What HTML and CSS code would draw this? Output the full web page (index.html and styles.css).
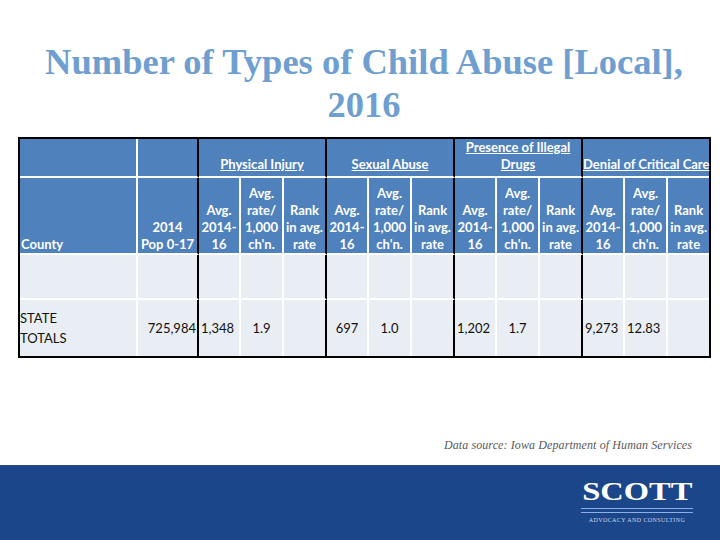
FILE: index.html
```html
<!DOCTYPE html>
<html>
<head>
<meta charset="utf-8">
<link rel="stylesheet" href="styles.css">
</head>
<body>
<div class="page">
  <h1 class="title">Number of Types of Child Abuse [Local],<br>2016</h1>
  <table class="data">
    <colgroup>
      <col style="width:118px"><col style="width:61px">
      <col style="width:42px"><col style="width:43px"><col style="width:43px">
      <col style="width:42px"><col style="width:43px"><col style="width:43px">
      <col style="width:42px"><col style="width:43px"><col style="width:43px">
      <col style="width:42px"><col style="width:43px"><col style="width:41px">
    </colgroup>
    <tr class="h1row">
      <th class="hd"></th>
      <th class="hd grp-end"></th>
      <th class="hd grp grp-end" colspan="3"><u>Physical Injury</u></th>
      <th class="hd grp grp-end" colspan="3"><u>Sexual Abuse</u></th>
      <th class="hd grp grp-end" colspan="3"><u>Presence of Illegal<br>Drugs</u></th>
      <th class="hd grp last" colspan="3"><u>Denial of Critical Care</u></th>
    </tr>
    <tr class="h2row">
      <th class="hd left">County</th>
      <th class="hd grp-end">2014<br>Pop 0-17</th>
      <th class="hd">Avg.<br>2014-<br>16</th><th class="hd">Avg.<br>rate/<br>1,000<br>ch'n.</th><th class="hd grp-end">Rank<br>in avg.<br>rate</th>
      <th class="hd">Avg.<br>2014-<br>16</th><th class="hd">Avg.<br>rate/<br>1,000<br>ch'n.</th><th class="hd grp-end">Rank<br>in avg.<br>rate</th>
      <th class="hd">Avg.<br>2014-<br>16</th><th class="hd">Avg.<br>rate/<br>1,000<br>ch'n.</th><th class="hd grp-end">Rank<br>in avg.<br>rate</th>
      <th class="hd">Avg.<br>2014-<br>16</th><th class="hd">Avg.<br>rate/<br>1,000<br>ch'n.</th><th class="hd last">Rank<br>in avg.<br>rate</th>
    </tr>
    <tr class="erow">
      <td></td><td class="grp-end"></td>
      <td></td><td></td><td class="grp-end"></td>
      <td></td><td></td><td class="grp-end"></td>
      <td></td><td></td><td class="grp-end"></td>
      <td></td><td></td><td class="last"></td>
    </tr>
    <tr class="drow">
      <td class="name">STATE<br>TOTALS</td>
      <td class="grp-end r">725,984</td>
      <td class="l">1,348</td><td class="c">1.9</td><td class="grp-end"></td>
      <td class="c">697</td><td class="c">1.0</td><td class="grp-end"></td>
      <td class="l">1,202</td><td class="c">1.7</td><td class="grp-end"></td>
      <td class="l">9,273</td><td class="l">12.83</td><td class="last"></td>
    </tr>
  </table>
  <p class="source">Data source: Iowa Department of Human Services</p>
</div>
<footer class="footer">
  <div class="logo">
    <div class="logo-name"><span>SCOTT</span></div>
    <div class="logo-rule"></div>
    <div class="logo-rule"></div>
    <div class="logo-sub">ADVOCACY AND CONSULTING</div>
  </div>
</footer>
</body>
</html>
```

FILE: styles.css
```css
html, body {
  margin: 0;
  padding: 0;
  background: #ffffff;
}
body {
  width: 720px;
  height: 540px;
  overflow: hidden;
  display: flex;
  flex-direction: column;
}
.page {
  height: 465px;
  display: flex;
  flex-direction: column;
}
.title {
  margin: 0;
  padding-top: 40px;
  padding-left: 8px;
  height: 137px;
  box-sizing: border-box;
  font-family: "Liberation Serif", "Times New Roman", serif;
  font-weight: bold;
  font-size: 36.5px;
  line-height: 43px;
  color: #6f9fd0;
  text-align: center;
  white-space: nowrap;
}
.data {
  margin-left: 18px;
  width: 693px;
  table-layout: fixed;
  border-collapse: separate;
  border-spacing: 0;
  border: 2px solid #000;
  font-family: Lato, "Open Sans", sans-serif;
}
.data th, .data td {
  padding: 0;
  border-right: 2px solid #fff;
  border-bottom: 2px solid #fff;
  box-sizing: border-box;
}
.data tr:last-child td {
  border-bottom: none;
}
.data .grp-end {
  border-right-color: #000;
}
.data .last {
  border-right: none;
}
.hd {
  background: #4f81bd;
  color: #fff;
  font-weight: bold;
  font-size: 13px;
  line-height: 16.8px;
  vertical-align: bottom;
  text-align: center;
  white-space: nowrap;
  padding-bottom: 2px;
}
.hd.left {
  text-align: left;
  padding-left: 1px;
}
.h1row {
  height: 38px;
}
.h1row .hd {
  padding-bottom: 3px;
}
.h2row {
  height: 77px;
}
.erow {
  height: 45px;
}
.drow {
  height: 56px;
}
.data td {
  background: #e9edf4;
  color: #111;
  font-size: 13px;
  line-height: 20px;
  vertical-align: middle;
}
.data td.name {
  text-align: left;
  padding-left: 0;
}
.data td.r {
  text-align: right;
  padding-right: 1px;
}
.data td.l {
  text-align: left;
  padding-left: 2px;
}
.data td.c {
  text-align: center;
}
.source {
  margin: 0;
  margin-top: auto;
  padding: 0 28px 12px 0;
  text-align: right;
  font-family: "Liberation Serif", "DejaVu Serif", serif;
  font-style: italic;
  font-size: 12px;
  letter-spacing: 0.1px;
  color: #595959;
}
.footer {
  flex: 1;
  background: #1b4689;
  border-top: 1px solid #2a4a7a;
  display: flex;
  justify-content: flex-end;
  align-items: flex-start;
  padding-right: 27px;
}
.logo {
  width: 112px;
  padding-top: 13px;
  display: flex;
  flex-direction: column;
  align-items: stretch;
}
.logo-name {
  font-family: "Liberation Serif", "Times New Roman", serif;
  font-weight: bold;
  font-size: 25px;
  line-height: 25px;
  color: #fff;
  text-align: center;
  margin-bottom: 1px;
}
.logo-name span {
  display: inline-block;
  transform: scaleX(1.3);
}
.logo-rule {
  height: 1px;
  background: #8db0e6;
  margin-top: 3px;
}
.logo-sub {
  margin-top: 4px;
  font-family: "Liberation Serif", serif;
  font-size: 6px;
  line-height: 6px;
  color: #c8d6ee;
  text-align: center;
  white-space: nowrap;
  letter-spacing: 0.4px;
}
```
